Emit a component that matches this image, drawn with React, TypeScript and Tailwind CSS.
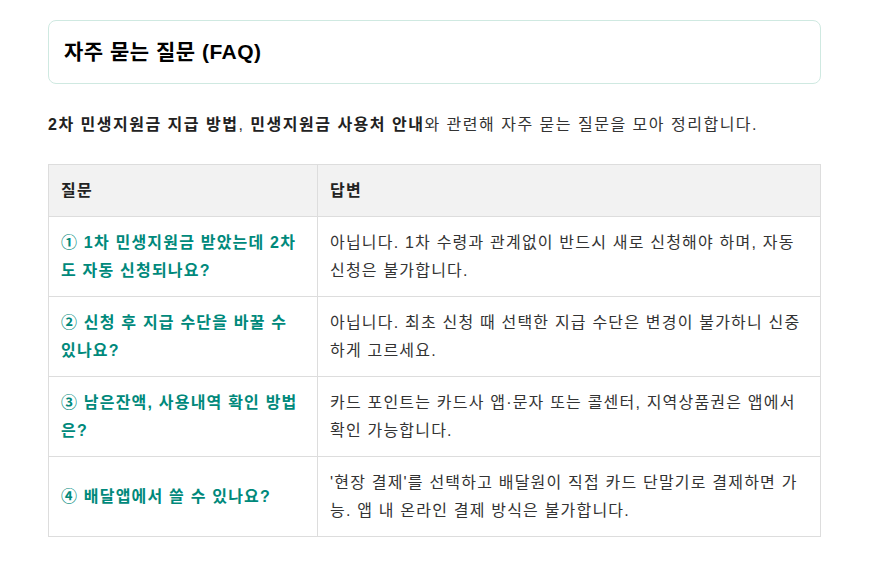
import React from "react";

const rows = [
  {
    q: "① 1차 민생지원금 받았는데 2차도 자동 신청되나요?",
    a: "아닙니다. 1차 수령과 관계없이 반드시 새로 신청해야 하며, 자동 신청은 불가합니다.",
  },
  {
    q: "② 신청 후 지급 수단을 바꿀 수 있나요?",
    a: "아닙니다. 최초 신청 때 선택한 지급 수단은 변경이 불가하니 신중하게 고르세요.",
  },
  {
    q: "③ 남은잔액, 사용내역 확인 방법은?",
    a: "카드 포인트는 카드사 앱·문자 또는 콜센터, 지역상품권은 앱에서 확인 가능합니다.",
  },
  {
    q: "④ 배달앱에서 쓸 수 있나요?",
    a: "'현장 결제'를 선택하고 배달원이 직접 카드 단말기로 결제하면 가능. 앱 내 온라인 결제 방식은 불가합니다.",
  },
];

export default function App() {
  return (
    <div className="min-h-screen bg-white px-12 pt-5 text-[#222] font-['Liberation_Sans','Noto_Sans_CJK_KR',sans-serif]">
      <div className="w-[773px]">
        <div className="rounded-lg border border-[#cfe9e1] px-[15px] py-[14px]">
          <h2 className="text-[21px] font-bold leading-[34px] tracking-[0.5px] text-black">자주 묻는 질문 (FAQ)</h2>
        </div>

        <p className="mt-[27px] text-[16px] leading-[28px] tracking-[1.5px] text-[#333]">
          <strong className="font-bold text-[#222]">2차 민생지원금 지급 방법</strong>,{" "}
          <strong className="font-bold text-[#222]">민생지원금 사용처 안내</strong>와 관련해 자주 묻는 질문을 모아 정리합니다.
        </p>

        <table className="mt-[25px] w-full border-collapse text-[16px] leading-[28px] tracking-[1.2px]">
          <thead>
            <tr className="bg-[#f2f2f2]">
              <th className="w-[269px] border border-[#dddddd] px-3 py-[11.5px] text-left font-bold text-[#222]">질문</th>
              <th className="border border-[#dddddd] px-3 py-[11.5px] text-left font-bold text-[#222]">답변</th>
            </tr>
          </thead>
          <tbody>
            {rows.map((r) => (
              <tr key={r.q}>
                <td className="border border-[#dddddd] px-3 py-[11.5px] align-middle font-bold text-[#00897b]">{r.q}</td>
                <td className="border border-[#dddddd] px-3 py-[11.5px] align-middle text-[#333]">{r.a}</td>
              </tr>
            ))}
          </tbody>
        </table>
      </div>
    </div>
  );
}
